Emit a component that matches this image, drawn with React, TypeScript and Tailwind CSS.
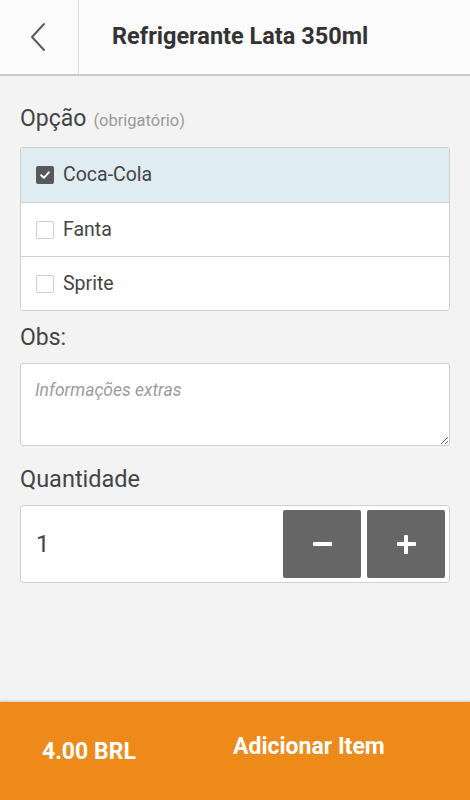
import React from "react";

export default function App() {
  const options = [
    { label: "Coca-Cola", checked: true },
    { label: "Fanta", checked: false },
    { label: "Sprite", checked: false },
  ];
  return (
    <div
      className="flex h-[800px] w-[470px] flex-col bg-[#f3f3f3] text-[#444]"
      style={{ fontFamily: "Roboto, 'Noto Sans', Arial, sans-serif" }}
    >
      {/* Header */}
      <div className="flex h-[76px] shrink-0 border-b-2 border-[#c9c9c9] bg-[#fbfbfb]">
        <div className="flex w-[79px] items-center justify-center border-r-[1.5px] border-[#dcdcdc]">
          <svg width="18" height="30" viewBox="0 0 18 30" className="-ml-[2px]">
            <path d="M15 2 L3 15 L15 28" fill="none" stroke="#5a5a5a" strokeWidth="2" strokeLinecap="round" strokeLinejoin="round" />
          </svg>
        </div>
        <div className="flex items-center pl-[33px] pb-[1px] text-[23.5px] font-bold text-[#333]">
          Refrigerante Lata 350ml
        </div>
      </div>

      {/* Body */}
      <div className="flex flex-col px-[20px] pt-[29px]">
        <div className="flex items-baseline text-[23px] leading-[27px] text-[#444]">
          Opção
          <span className="ml-[7px] text-[16.5px] text-[#9a9a9a]">(obrigatório)</span>
        </div>

        <div className="mt-[13px] overflow-hidden rounded-[3px] border border-[#cfcfcf] bg-white">
          {options.map((o, i) => (
            <div
              key={o.label}
              className={
                "flex h-[54px] items-center pl-[15px] " +
                (i > 0 ? "border-t border-[#cfcfcf] " : "") +
                (o.checked ? "bg-[#dfedf3]" : "bg-white")
              }
            >
              {o.checked ? (
                <div className="flex h-[18px] w-[18px] items-center justify-center rounded-[2px] bg-[#585858]">
                  <svg width="12" height="12" viewBox="0 0 12 12">
                    <path d="M2.2 6.3 L4.8 8.8 L9.8 3.3" fill="none" stroke="#fff" strokeWidth="2" strokeLinecap="round" strokeLinejoin="round" />
                  </svg>
                </div>
              ) : (
                <div className="h-[18px] w-[18px] rounded-[2px] border border-[#cfcfcf] bg-white" />
              )}
              <span className="ml-[9px] text-[19.5px] text-[#444]">{o.label}</span>
            </div>
          ))}
        </div>

        <div className="mt-[13px] text-[23px] leading-[27px] text-[#444]">Obs:</div>

        <textarea
          placeholder="Informações extras"
          className="mt-[12px] h-[83px] w-full rounded-[3px] border border-[#cfcfcf] bg-white px-[14px] pt-[16px] text-[17.5px] leading-[20px] text-[#444] outline-none placeholder:italic placeholder:text-[#9c9c9c]"
          style={{ fontFamily: "Roboto, 'Noto Sans', Arial, sans-serif" }}
        />

        <div className="mt-[20px] text-[23.5px] leading-[27px] text-[#444]">Quantidade</div>

        <div className="mt-[12px] flex h-[78px] items-center rounded-[3px] border border-[#cfcfcf] bg-white pl-[15px] pr-[4px]">
          <div className="flex-1 text-[24px] text-[#444]">1</div>
          <div className="flex gap-[6px]">
            <button className="flex h-[68px] w-[78px] items-center justify-center rounded-[2px] bg-[#666666]">
              <div className="h-[4px] w-[19px] rounded-[1px] bg-white" />
            </button>
            <button className="relative flex h-[68px] w-[78px] items-center justify-center rounded-[2px] bg-[#666666]">
              <div className="h-[4px] w-[19px] rounded-[1px] bg-white" />
              <div className="absolute h-[19px] w-[4px] rounded-[1px] bg-white" />
            </button>
          </div>
        </div>
      </div>

      {/* Footer */}
      <div className="mt-auto flex h-[98px] shrink-0 bg-[#ee8a1a] text-white shadow-[0_-1px_2px_rgba(0,0,0,0.18)]">
        <div className="w-[233px] pl-[42px] pt-[36px] text-[23px] font-bold leading-[27px]">4.00 BRL</div>
        <div className="pt-[31px] text-[23px] font-bold leading-[27px]">Adicionar Item</div>
      </div>
    </div>
  );
}
